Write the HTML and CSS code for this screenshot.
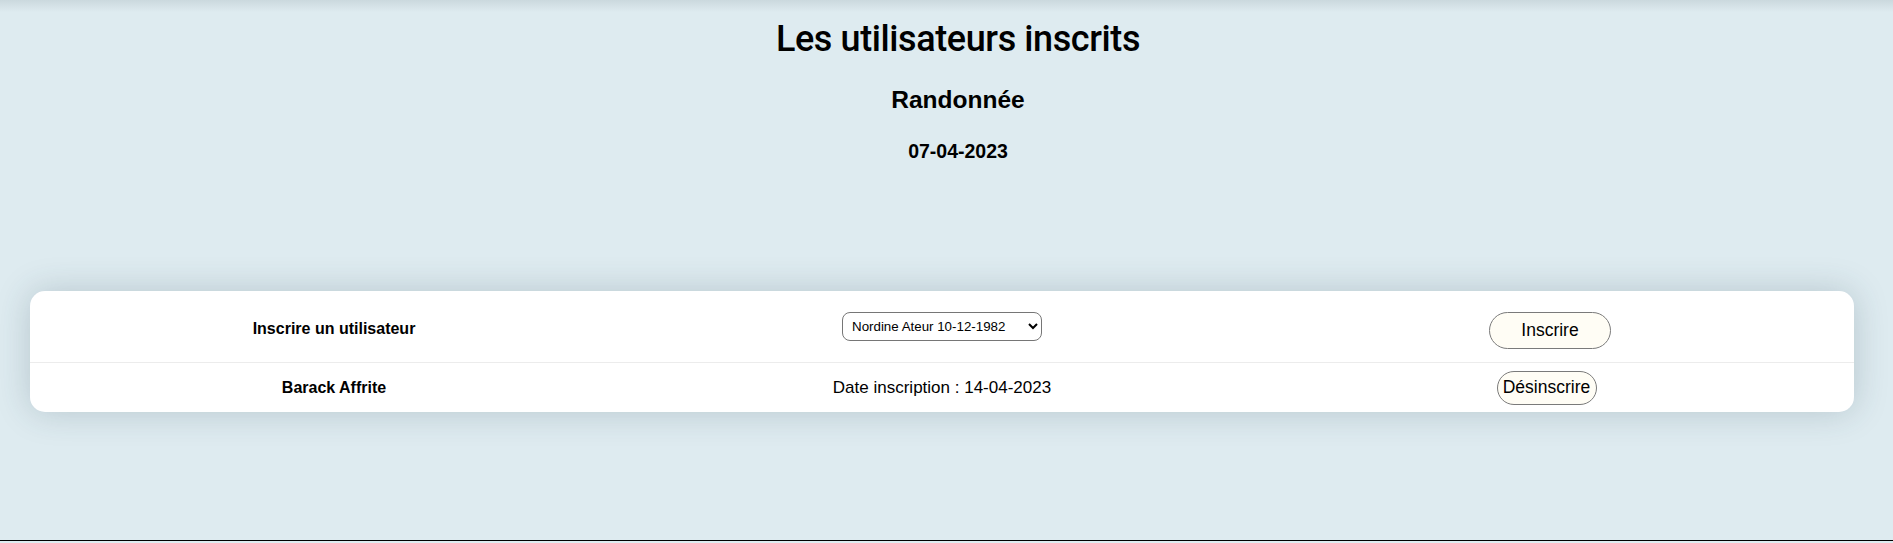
FILE: index.html
```html
<!DOCTYPE html>
<html lang="fr">
<head>
<meta charset="utf-8">
<title>Les utilisateurs inscrits</title>
<link rel="stylesheet" href="styles.css">
</head>
<body>
<main class="page">
  <header class="head">
    <h1 class="title">Les utilisateurs inscrits</h1>
    <h2 class="activity">Randonnée</h2>
    <h3 class="date">07-04-2023</h3>
  </header>
  <section class="card">
    <div class="row row-form">
      <div class="cell cell-label cell-label-form">Inscrire un utilisateur</div>
      <div class="cell">
        <select class="user-select">
          <option>Nordine Ateur 10-12-1982</option>
          <option>Barack Affrite 04-08-1961</option>
        </select>
      </div>
      <div class="cell">
        <button class="btn btn-add" type="button">Inscrire</button>
      </div>
    </div>
    <div class="row row-user">
      <div class="cell cell-label">Barack Affrite</div>
      <div class="cell cell-text">Date inscription : 14-04-2023</div>
      <div class="cell">
        <button class="btn btn-remove" type="button">Désinscrire</button>
      </div>
    </div>
  </section>
</main>
<footer class="foot"></footer>
</body>
</html>
```
FILE: styles.css
```css
* { box-sizing: border-box; }

html, body { height: 100%; }

body {
  margin: 0;
  min-height: 100vh;
  display: flex;
  flex-direction: column;
  font-family: "Liberation Sans", Arial, sans-serif;
  color: #000;
  background: linear-gradient(#cbd9de, #deebf0 12px) top left / 100% 12px no-repeat, #deebf0;
}

.page { flex: 1 0 auto; }

.head {
  display: flex;
  flex-direction: column;
  align-items: center;
  padding: 17px 0 0 23px;
}

.title {
  margin: 0;
  font-family: Roboto, "Liberation Sans", Arial, sans-serif;
  font-size: 36px;
  line-height: 44px;
  font-weight: 500;
  letter-spacing: -0.4px;
}

.activity {
  margin: 24px 0 0;
  font-size: 24.5px;
  line-height: 30px;
  font-weight: 700;
}

.date {
  margin: 24px 0 0;
  font-size: 19.5px;
  line-height: 24px;
  font-weight: 700;
}

.card {
  margin: 128px 39px 0 30px;
  background: #fff;
  border-radius: 15px;
  box-shadow: 0 0 34px rgba(40, 70, 80, 0.22);
  overflow: hidden;
}

.row {
  display: grid;
  grid-template-columns: repeat(3, 1fr);
  align-items: center;
}

.row-form { height: 72px; border-bottom: 1px solid #ececec; }
.row-user { height: 49px; }

.cell {
  display: flex;
  justify-content: center;
  align-items: center;
  font-size: 17px;
}

.cell-label { font-size: 16px; font-weight: 700; }
.cell-label-form { margin-top: 4px; }

.user-select {
  width: 200px;
  height: 29px;
  border: 1px solid #767676;
  border-radius: 8px;
  background: #fff;
  padding: 0 4px 0 5px;
  font-family: "Liberation Sans", Arial, sans-serif;
  font-size: 13.33px;
  color: #000;
}

.btn {
  font-family: "Liberation Sans", Arial, sans-serif;
  color: #000;
  background: #fffdf5;
  border: 1px solid #7a7a7a;
  cursor: pointer;
  font-size: 17.5px;
}

.btn-add {
  width: 122px;
  height: 37px;
  margin-top: 8px;
  border-radius: 19px;
}

.btn-remove {
  width: 100px;
  height: 34px;
  padding: 0;
  margin-right: 7px;
  border-radius: 17px;
}

.foot {
  flex: 0 0 auto;
  height: 3px;
  border-top: 1px solid #000;
}
```
